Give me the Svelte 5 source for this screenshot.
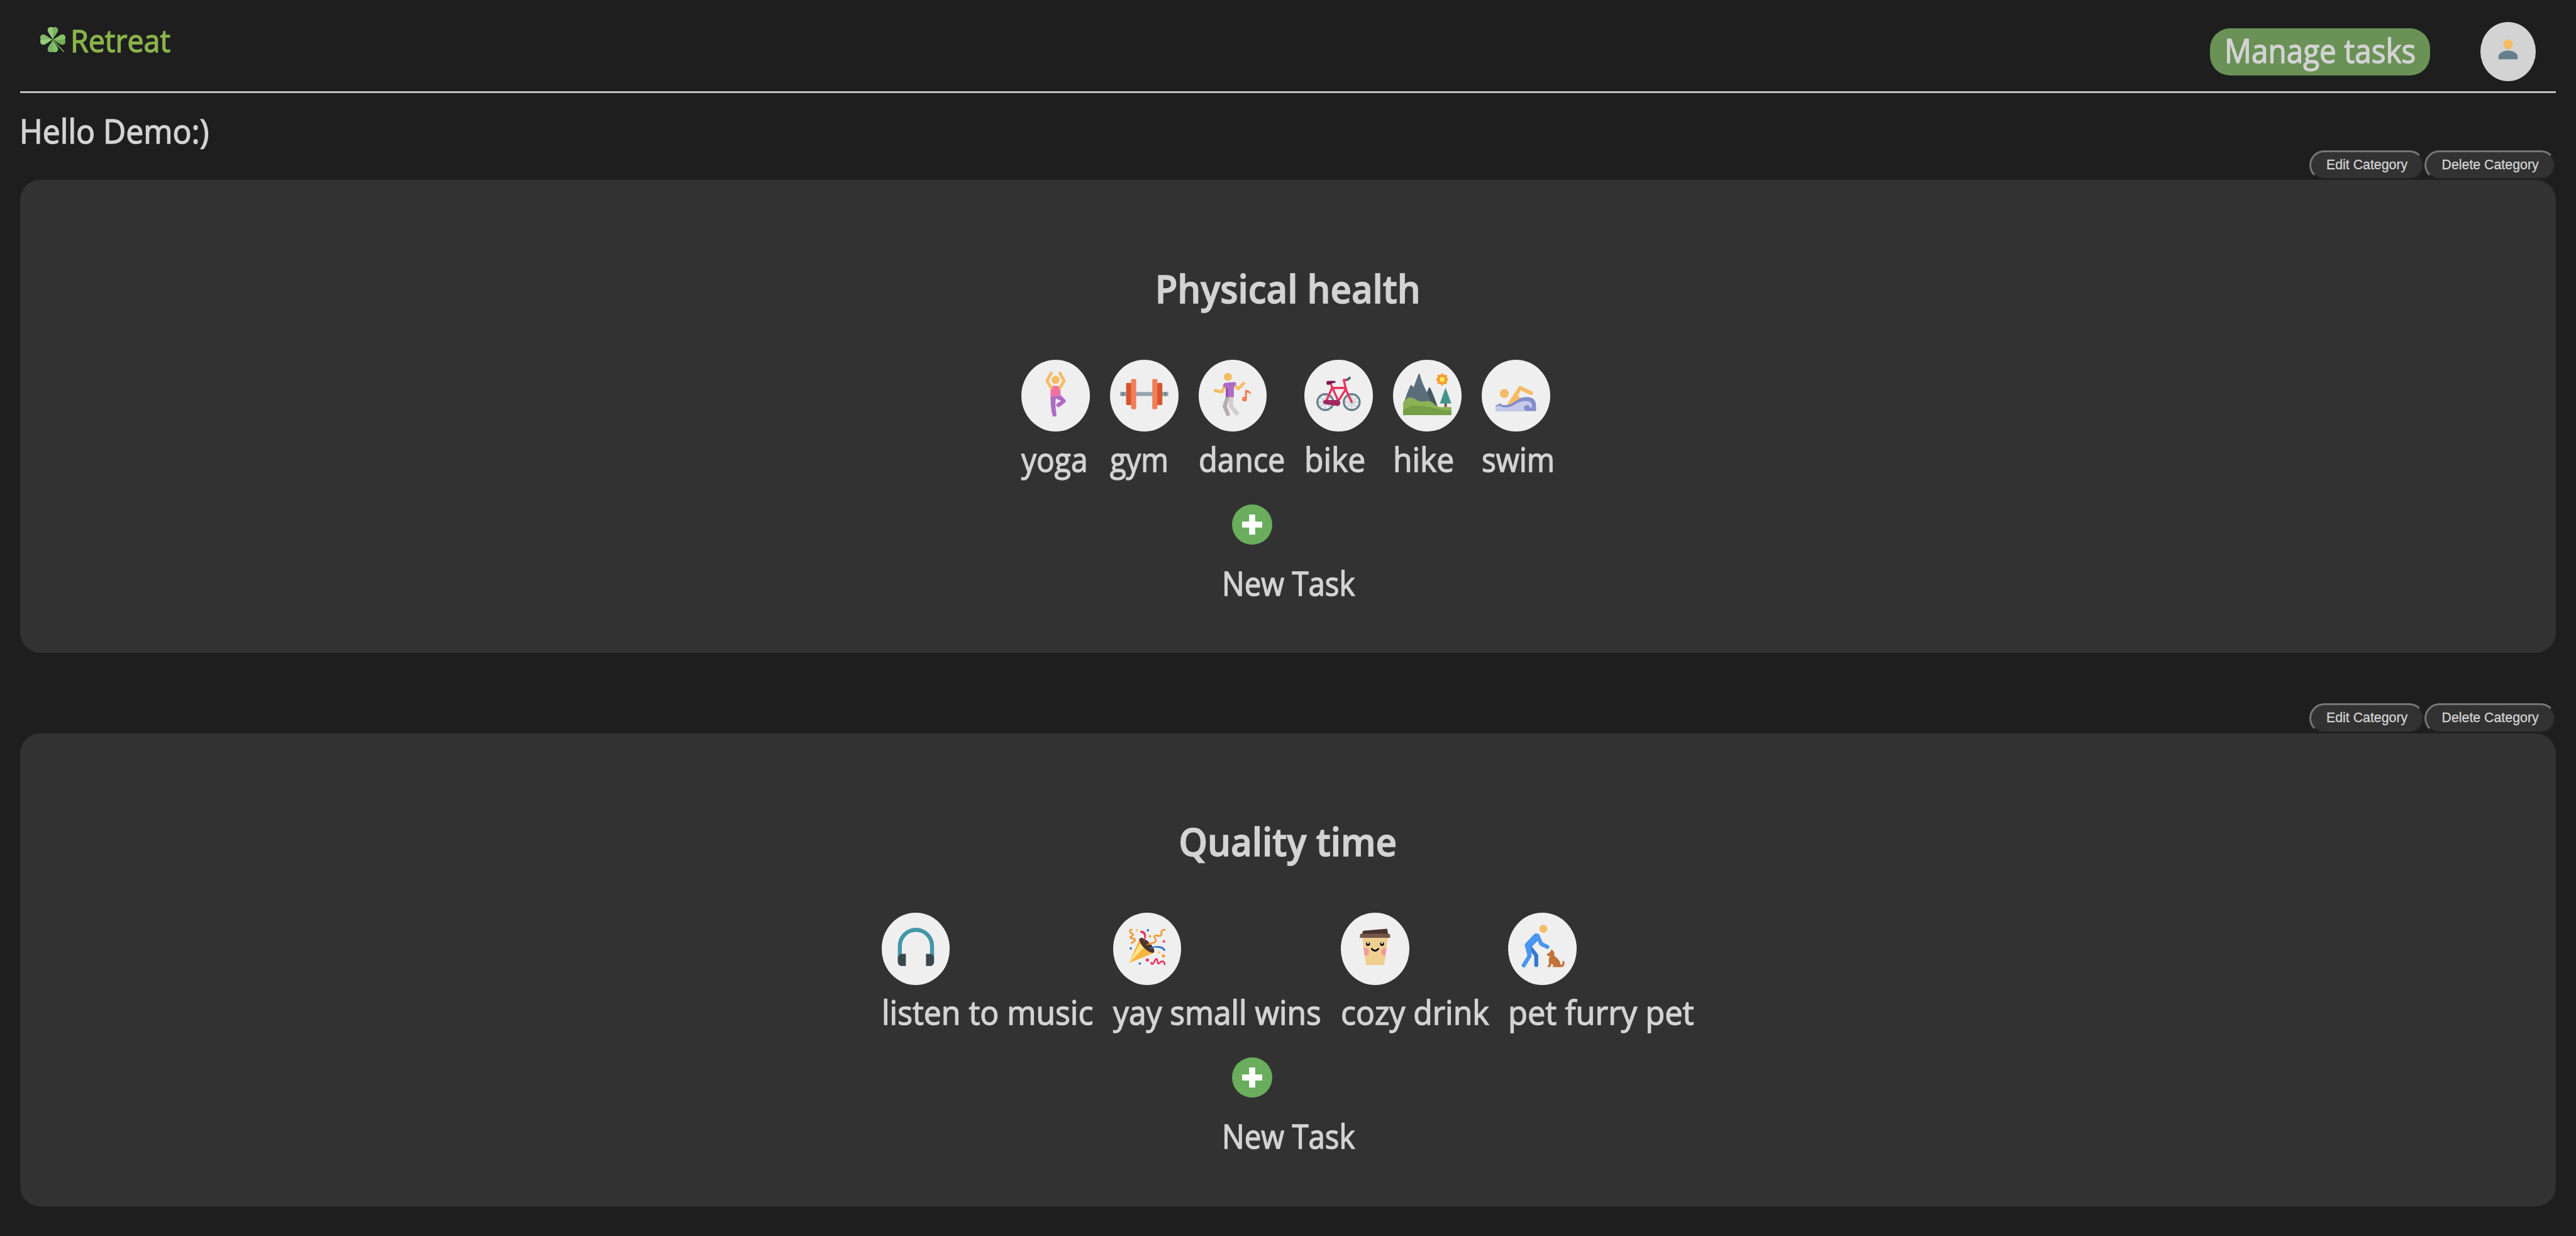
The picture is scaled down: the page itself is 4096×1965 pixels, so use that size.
<script>
  const categories = [
    {
      name: 'Physical health',
      fit: 0.952,
      tasks: [
        { label: 'yoga', icon: 'yoga', width: 108.8, fit: 0.915 },
        { label: 'gym', icon: 'gym', width: 108.8, fit: 0.9 },
        { label: 'dance', icon: 'dance', width: 136.8, fit: 0.93 },
        { label: 'bike', icon: 'bike', width: 108.8, fit: 0.95 },
        { label: 'hike', icon: 'hike', width: 108.8, fit: 0.95 },
        { label: 'swim', icon: 'swim', width: 116, fit: 0.912 }
      ]
    },
    {
      name: 'Quality time',
      fit: 0.955,
      tasks: [
        { label: 'listen to music', icon: 'music', width: 336, fit: 0.953 },
        { label: 'yay small wins', icon: 'party', width: 330.4, fit: 0.948 },
        { label: 'cozy drink', icon: 'drink', width: 234.4, fit: 0.952 },
        { label: 'pet furry pet', icon: 'pet', width: 296, fit: 0.965 }
      ]
    }
  ];

  const viewBoxes = {
    party: '30 57 288 288',
    drink: '75 72 288 288',
    pet: '1074 72 288 288'
  };

  // x, y, half diagonal, colour
  const confetti = [
    [111, 102, 9, '#f6c34e'],
    [177, 102, 9, '#3677cc'],
    [189, 138, 9, '#f29a37'],
    [273, 168, 9, '#e6325f'],
    [75, 210, 9, '#3677cc'],
    [243, 234, 9, '#f6c34e'],
    [270, 255, 12, '#f29a37'],
    [174, 279, 12, '#e6325f'],
    [129, 300, 9, '#3677cc']
  ];

  const leaves = [
    { angle: 0, first: '#93cb78', second: '#7bb067' },
    { angle: 90, first: '#85c466', second: '#74ad58' },
    { angle: 180, first: '#82c463', second: '#7bb067' },
    { angle: 270, first: '#93cc77', second: '#84b96f' }
  ];
</script>

{#snippet icon(name)}
  <svg class="icon" viewBox={viewBoxes[name] ?? '0 0 96 96'} fill="none" stroke-linejoin="round">
    {#if name === 'yoga'}
      <path fill="#f06fa3" d="M42 32H54L58 40V50L38 54V40z" />
      <path
        fill="#ae6cc4"
        d="M38 54L58 50L67 59a4 4 0 0 1 0 6L56.500 73a4 4 0 0 1-5.500-6.500L59 61.500L48.500 57Q46.500 70 49.700 88a4 4 0 0 1-8 1.500Q38 75 38 54z"
      />
      <circle cx="48" cy="20" r="8" fill="#f5bc65" />
      <path d="M39.300 6.500L31 22L39.300 36M56.700 6.500L65 22L56.700 36" stroke="#f5bc65" stroke-width="6" stroke-linecap="round" />
    {:else if name === 'gym'}
      <path fill="#94a4af" d="M0 44H96V52H0z" />
      <path fill="#667e8b" d="M4 44H8V52H4zM88 44H92V52H88z" />
      <g fill="#d7552e">
        <rect x="12" y="26" width="11" height="44" rx="2" />
        <rect x="73" y="26" width="11" height="44" rx="2" />
      </g>
      <g fill="#f07f58">
        <rect x="22" y="18" width="10" height="60" rx="2" />
        <rect x="64" y="18" width="10" height="60" rx="2" />
      </g>
    {:else if name === 'dance'}
      <path d="M31 34L26 44L12.600 41" stroke="#f5bc65" stroke-width="6" stroke-linecap="round" />
      <path d="M51 31L59 37.500L69.500 26.500" stroke="#f5bc65" stroke-width="6" stroke-linecap="round" />
      <path d="M37 56L31.500 72.300L38 88" stroke="#b3aeae" stroke-width="8" stroke-linecap="round" />
      <path d="M45 56L44 72L55.500 86" stroke="#d3cdcb" stroke-width="8.500" stroke-linecap="round" />
      <path fill="#ae6cc4" d="M31 26L51 24Q54 25 55.500 28L50 33V54H34V36L28 33Q29 28 31 26z" />
      <path fill="#9b46b5" d="M34 36L38 38V54H34z" />
      <circle cx="38" cy="14" r="8" fill="#f5bc65" />
      <circle cx="71" cy="58" r="4.800" fill="#f07f58" />
      <path fill="#f07f58" d="M72 40H76Q84 42 84 50Q81 45 75.800 45V58H72z" />
    {:else if name === 'bike'}
      {#each [21.700, 74.200] as x}
        <path
          d="M{x} 48V80M{x - 16} 64H{x + 16}M{x - 11} 53L{x + 11} 75M{x + 11} 53L{x - 11} 75"
          stroke="#d0d9dd"
          stroke-width="3.600"
        />
        <circle cx={x} cy="64" r="15.800" stroke="#667e8b" stroke-width="4" />
      {/each}
      <g stroke="#e6325f" stroke-width="4.200" stroke-linecap="round">
        <path d="M74.200 64L63 40L58.300 20H65" />
        <path d="M32.500 28L47.500 62L62.600 38M34.500 36H62.400M23.500 62L35 36" />
      </g>
      <path fill="#a0275d" d="M22 60H46.500a5.500 6 0 0 1-1 12L21 68a4 4 0 0 1 1-8z" />
      <path d="M65.500 19.300Q68 19 70 16" stroke="#4a5a66" stroke-width="4.600" stroke-linecap="round" />
      <path fill="#7b1a4c" d="M27 22H40a2 2 0 0 1 0 4L36 26.500L29 29.800Q24 30.500 24 26.500V25Q24 22 27 22z" />
    {:else if name === 'hike'}
      <path fill="#47575f" d="M46 48L51 36Q52.500 34 54 36Q60 48 69 74H50z" />
      <path fill="#5a6e7a" d="M0 66L3 61Q8 45 14 32Q16 29 18 31L20.700 35L30.500 9Q32 6 33.500 9Q36 22 47 44L56 64z" />
      <path fill="#8bb255" d="M0 66C7 54 15 53 22 57C29 61 31 64 40 62.500C50 61.500 55 61 62 68C67 73 70 74 76 74H96V90H0z" />
      <path fill="#759e46" d="M0 80C14 70 26 70 44 72.500C62 75 75 81 96 81V90H0z" />
      <path fill="#795548" d="M82 66H87V74H82z" />
      <path fill="#429488" d="M84.300 35L73.200 67H96z" />
      <path fill="#f39f36" d="M68.500 10H87V28H68.500z" />
      <path fill="#f39f36" d="M77.700 6.200L90.300 19L77.700 31.800L65.100 19z" />
      <circle cx="77.700" cy="19" r="4.700" fill="#feeb5c" />
    {:else if name === 'swim'}
      <circle cx="25" cy="47" r="9" fill="#f5bc65" />
      <path d="M56.500 36L78 46" stroke="#f5bc65" stroke-width="8" stroke-linecap="round" />
      <path fill="#f5bc65" d="M29 71L53 34.500L60 37L57 41L52 52L58 56L42 69z" />
      <path
        fill="#828dcc"
        d="M8 70L12.500 69.500L16 66L20 69.500C32 72 40 67 49 61C57 55 63 54 70 54C84 54 88 62 88 72V82H8z"
      />
      <path
        fill="#c6c9e8"
        d="M8 73L15.500 71C22 76 34 76 44 70C54 64 60 62 68 62C76 62 80 66 80 71C80 75 78 76.500 76 76C76.500 72 73 70 69.500 70C66 70 64 73 64 76C64 80 67 82 71 82H8z"
      />
    {:else if name === 'music'}
      <path fill="#4396a8" d="M12 72V46a36 36 0 0 1 72 0V72H76V46a28 28 0 0 0-56 0V72z" />
      <path
        fill="#3a474f"
        d="M28 62V86H20a8 8 0 0 1-8-8V70a8 8 0 0 1 8-8zM68 62V86H76a8 8 0 0 0 8-8V70a8 8 0 0 0-8-8z"
      />
    {:else if name === 'party'}
      <path fill="#f7b53f" d="M66 297L128 150L214 236z" />
      <path fill="#fde78a" d="M66 297L130 180L153 205z" />
      <ellipse cx="171" cy="192" rx="59" ry="22" transform="rotate(45 171 192)" fill="#4a342e" />
      <path fill="#e6325f" d="M132 105C168 103 178 132 150 180C159 150 160 116 132 116z" />
      <path
        d="M84 98C66 98 66 114 80 120C98 128 88 136 76 138C66 148 76 150 94 152C108 156 100 170 76 178"
        stroke="#f29a37"
        stroke-width="10"
      />
      <path
        d="M282 99C262 97 254 108 258 124C257 142 240 133 220 133C206 140 226 152 225 166C222 178 200 176 180 185"
        stroke="#f29a37"
        stroke-width="10"
      />
      <path fill="#f29a37" d="M162 194C170 184 180 180 196 176L199 184C184 185 174 188 162 194z" />
      <path fill="#3677cc" d="M180 212C215 190 275 188 282 224H271C262 203 220 202 180 212z" />
      <path
        d="M197 291C197 306 206 306 211 296C218 284 222 272 228 272C236 272 231 300 240 301C247 300 250 286 263 287C275 288 277 298 277 309"
        stroke="#e6325f"
        stroke-width="10"
      />
      {#each confetti as [x, y, r, color]}
        <path fill={color} d="M{x} {y - r}L{x + r} {y}L{x} {y + r}L{x - r} {y}z" />
      {/each}
    {:else if name === 'drink'}
      <path fill="#efcf8f" d="M142 160H297L273 324H165z" />
      <path fill="#4a342e" d="M141 140L148 120L291 108L297 140z" />
      <path fill="#76564a" d="M129 162V147Q129 138 138 138H300Q309 138 309 147V162z" />
      <path fill="#f49a97" d="M150 222H159a24 24 0 0 1 0 48H157zM287 222H279a24 24 0 0 0 0 48H281z" />
      <circle cx="177" cy="198" r="12" fill="#000" />
      <circle cx="261" cy="198" r="12" fill="#000" />
      <circle cx="177" cy="192" r="6" fill="#fff" />
      <circle cx="261" cy="192" r="6" fill="#fff" />
      <path d="M200 228Q219 250 238 228" stroke="#000" stroke-width="11" stroke-linecap="round" />
    {:else if name === 'pet'}
      <path d="M1150 225L1182 268V324" stroke="#3878d0" stroke-width="24" stroke-linecap="round" />
      <g stroke="#4a95ee" stroke-linecap="round">
        <path d="M1183 156L1134 208" stroke-width="42" />
        <path d="M1128 212L1141 271L1107 326" stroke-width="24" />
        <path d="M1140 212L1142 270" stroke-width="22" />
        <path d="M1191 152L1211 198L1248 216" stroke-width="24" />
      </g>
      <circle cx="1224" cy="108" r="24" fill="#f5bc65" />
      <path
        fill="#c17137"
        d="M1273 229L1288 246L1290 270C1305 282 1326 296 1326 322C1338 322 1340 318 1338 306C1338 298 1350 298 1350 308C1352 328 1344 336 1326 336H1278L1285 326L1273 315L1265 336H1247C1250 328 1257 326 1258 310C1255 295 1256 285 1264 272C1252 272 1244 266 1245 258C1258 254 1268 246 1273 229z"
      />
    {/if}
  </svg>
{/snippet}

<main>
  <header>
    <a class="brand" href="#home">
      <svg class="clover" viewBox="240 162 150 150" fill="none">
        {#each leaves as leaf}
          <g transform="rotate({leaf.angle} 315 237)">
            <path fill={leaf.first} d="M315 237C305 214 284 196 284 180C284 162 304 158 315 165z" />
            <path fill={leaf.second} d="M315 237C325 214 346 196 346 180C346 162 326 158 315 165z" />
          </g>
        {/each}
        <path d="M315 237L381 310" stroke="#1e1e1e" stroke-width="9" />
        <path d="M315 237L381 310" stroke="#80c566" stroke-width="5" />
      </svg>
      <span class="brand-name">Retreat</span>
    </a>
    <nav>
      <button class="manage"><span>Manage tasks</span></button>
      <button class="avatar" aria-label="Profile">
        <svg viewBox="0 0 110 117">
          <ellipse cx="55" cy="44.500" rx="9.500" ry="9.700" fill="#f5bc65" />
          <path fill="#667e8b" d="M36 74V67C39 60 47 57 55 57S71 60 74 67V74z" />
        </svg>
      </button>
    </nav>
  </header>
  <div class="rule"></div>
  <p class="greeting"><span>Hello Demo:)</span></p>

  {#each categories as category}
    <section>
      <div class="actions">
        <button class="edit">Edit Category</button>
        <button class="delete">Delete Category</button>
      </div>
      <div class="card">
        <h2><span style:--fit={category.fit}>{category.name}</span></h2>
        <ul>
          {#each category.tasks as task}
            <li style:width="{task.width}px">
              <div class="bubble">{@render icon(task.icon)}</div>
              <span class="label" style:--fit={task.fit}>{task.label}</span>
            </li>
          {/each}
        </ul>
        <div class="new-task">
          <svg viewBox="0 0 80 80">
            <circle cx="40" cy="40" r="40" fill="#69ad5d" />
            <path fill="#fff" d="M34 20H46V34H60V46H46V60H34V46H20V34H34z" />
          </svg>
          <span class="label">New Task</span>
        </div>
      </div>
    </section>
  {/each}
</main>

<style>
  :global(body) {
    background: #1e1e1e;
  }

  main {
    box-sizing: border-box;
    height: 1965px;
    padding: 0 32px;
    overflow: hidden;
    background: #1e1e1e;
    color: #d3d3d3;
    font-family: 'Trebuchet MS', 'Open Sans', 'Noto Sans', sans-serif;
    font-size: 52.4px;
    line-height: 60px;
    -webkit-text-stroke: 1.4px currentColor;
  }

  button {
    padding: 0;
    border: 0;
    color: inherit;
    font: inherit;
  }

  header {
    display: flex;
    justify-content: space-between;
    align-items: flex-start;
    box-sizing: border-box;
    height: 144.8px;
    padding: 35.2px 32px 0;
  }

  .brand {
    display: flex;
    gap: 8px;
    padding-top: 8px;
    color: #8ab34a;
    text-decoration: none;
  }

  .clover {
    width: 40px;
    height: 40px;
  }

  .brand-name {
    font-size: 49.5px;
    line-height: 42px;
    transform: scaleX(0.94);
    transform-origin: left;
  }

  nav {
    display: flex;
    gap: 80px;
  }

  .manage {
    display: flex;
    justify-content: center;
    box-sizing: border-box;
    width: 349.6px;
    height: 75.2px;
    margin-top: 9.6px;
    padding-top: 5.500px;
    border-radius: 32px;
    background: #6a9156;
  }

  .manage span {
    transform: scaleX(0.91);
    white-space: nowrap;
  }

  .avatar {
    width: 88px;
    height: 93.6px;
    border-radius: 50%;
    background: #d3d3d3;
  }

  .avatar svg {
    display: block;
    width: 100%;
    height: 100%;
  }

  .rule {
    height: 3.2px;
    background: #c0c0c0;
  }

  .greeting {
    height: 61.5px;
    margin: 0;
    padding-top: 29.700px;
  }

  .greeting span {
    display: inline-block;
    margin-left: -1px;
    transform: scaleX(0.953);
    transform-origin: left;
  }

  section {
    margin-bottom: 80px;
  }

  .actions {
    display: flex;
    justify-content: flex-end;
    height: 47.2px;
  }

  .actions button {
    box-sizing: border-box;
    height: 47.2px;
    border: 3.2px solid;
    border-color: #767676 #212121 #212121 #767676;
    border-radius: 24px;
    background: #323232;
    font: 21.333px/1.2 Arial, 'Liberation Sans', sans-serif;
    -webkit-text-stroke: 0.3px currentColor;
  }

  .edit {
    width: 183.2px;
  }

  .delete {
    width: 208.8px;
  }

  .card {
    display: flex;
    flex-direction: column;
    align-items: center;
    box-sizing: border-box;
    height: 752px;
    padding-top: 132.3px;
    border-radius: 32px;
    background: #323232;
  }

  h2 {
    margin: 0;
    font-size: 61px;
    font-weight: 600;
    line-height: 80px;
  }

  h2 span {
    display: inline-block;
    transform: scaleX(var(--fit, 1));
  }

  ul {
    display: flex;
    gap: 32px;
    margin: 73.3px 0 0;
    padding: 0;
    list-style: none;
  }

  .bubble {
    box-sizing: border-box;
    width: 108.8px;
    height: 114.4px;
    padding: 16px;
    border-radius: 50%;
    background: #efefef;
  }

  .icon {
    display: block;
    width: 76.8px;
    height: 76.8px;
  }

  .label {
    display: block;
    margin-top: 13.7px;
    transform: scaleX(var(--fit, 1));
    transform-origin: left;
    white-space: nowrap;
  }

  .new-task {
    width: 209.6px;
    margin-top: 41.5px;
    --fit: 0.905;
  }

  .new-task svg {
    display: block;
    width: 64px;
    height: 64px;
    margin-left: 16px;
  }

  .new-task .label {
    margin-top: 31.3px;
  }
</style>
